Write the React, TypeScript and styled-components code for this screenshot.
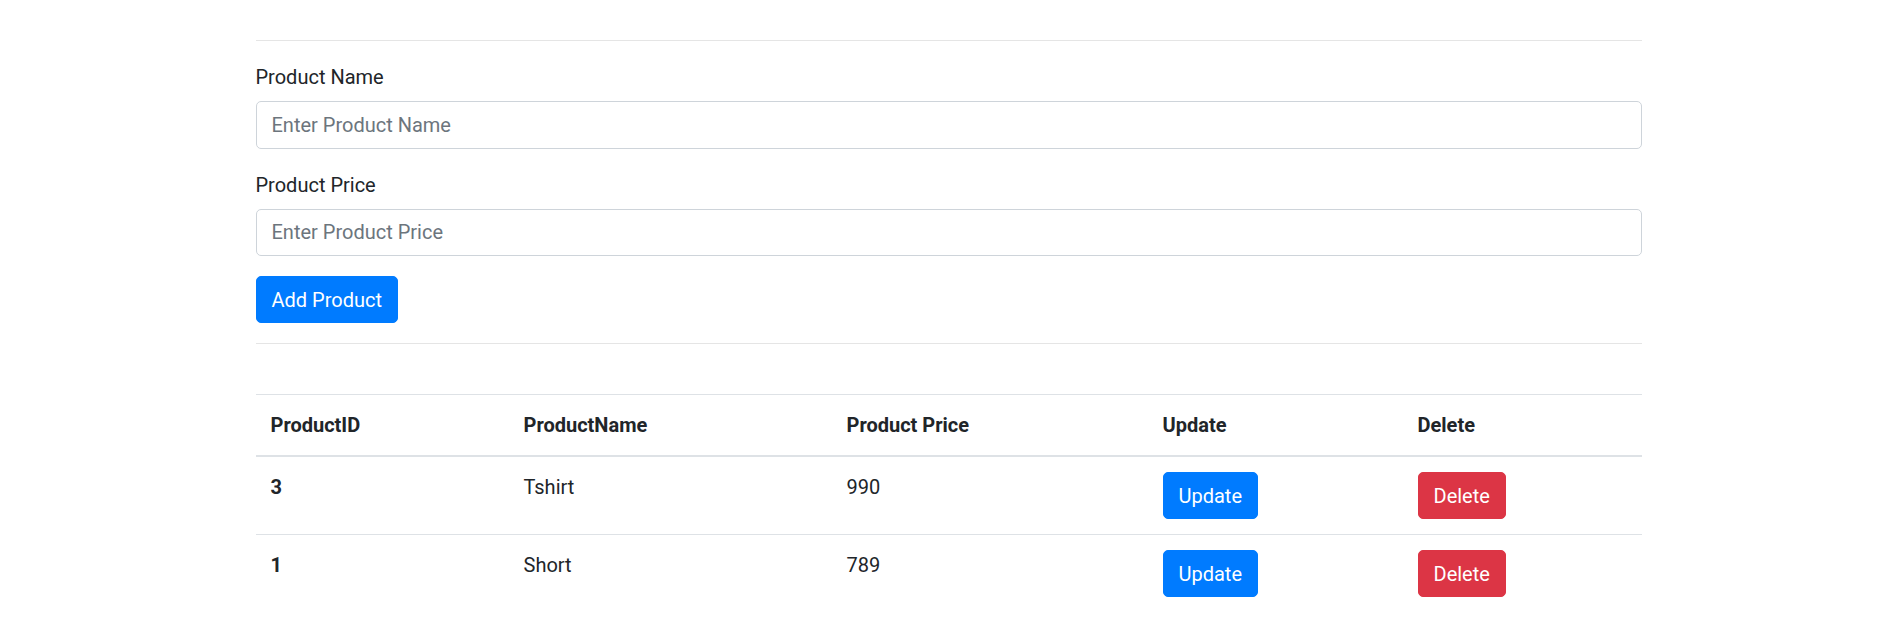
import React from "react";
import styled, { createGlobalStyle } from "styled-components";

type Product = {
  id: number;
  name: string;
  price: number;
};

const products: Product[] = [
  { id: 3, name: "Tshirt", price: 990 },
  { id: 1, name: "Short", price: 789 },
];

const columns = [
  { title: "ProductID", width: 253 },
  { title: "ProductName", width: 323 },
  { title: "Product Price", width: 316 },
  { title: "Update", width: 255 },
  { title: "Delete", width: 239 },
];

const App: React.FC = () => {
  return (
    <>
      <GlobalStyle />
      <Container>
        <Rule />
        <form onSubmit={(e) => e.preventDefault()}>
          <FormGroup>
            <Label htmlFor="productName">Product Name</Label>
            <Input id="productName" type="text" placeholder="Enter Product Name" />
          </FormGroup>
          <FormGroup>
            <Label htmlFor="productPrice">Product Price</Label>
            <Input id="productPrice" type="text" placeholder="Enter Product Price" />
          </FormGroup>
          <Button type="submit" $variant="primary">
            Add Product
          </Button>
        </form>
        <Rule />
        <Table>
          <colgroup>
            {columns.map((col) => (
              <Col key={col.title} $width={col.width} />
            ))}
          </colgroup>
          <thead>
            <tr>
              {columns.map((col) => (
                <HeadCell key={col.title}>{col.title}</HeadCell>
              ))}
            </tr>
          </thead>
          <tbody>
            {products.map((product) => (
              <tr key={product.id}>
                <RowHead scope="row">{product.id}</RowHead>
                <Cell>{product.name}</Cell>
                <Cell>{product.price}</Cell>
                <Cell>
                  <Button $variant="primary">Update</Button>
                </Cell>
                <Cell>
                  <Button $variant="danger">Delete</Button>
                </Cell>
              </tr>
            ))}
          </tbody>
        </Table>
      </Container>
    </>
  );
};

export default App;

const GlobalStyle = createGlobalStyle`
  html, body {
    margin: 0;
    padding: 0;
    background: #fff;
  }

  body {
    font-family: "Segoe UI", Roboto, "Liberation Sans", Arial, sans-serif;
    font-size: 20px;
    line-height: 1.5;
    color: #212529;
  }

  *, *::before, *::after {
    box-sizing: border-box;
  }
`;

const Container = styled.div`
  width: 1386px;
  margin: 0 auto;
  padding-top: 20px;
`;

const Rule = styled.hr`
  margin: 20px 0;
  border: 0;
  border-top: 1px solid rgba(0, 0, 0, 0.1);
`;

const FormGroup = styled.div`
  margin-bottom: 20px;
`;

const Label = styled.label`
  display: inline-block;
  margin-bottom: 10px;
  padding-top: 1px;
`;

const Input = styled.input`
  display: block;
  width: 100%;
  height: 47.5px;
  margin-top: -1px;
  padding: 7.5px 15px;
  font-family: inherit;
  font-size: 20px;
  line-height: 1.5;
  color: #495057;
  background: #fff;
  border: 1px solid #ced4da;
  border-radius: 5px;
  outline: none;

  &::placeholder {
    color: #6c757d;
  }
`;

const Button = styled.button<{ $variant: "primary" | "danger" }>`
  display: inline-block;
  padding: 7.5px 15px;
  font-family: inherit;
  font-size: 20px;
  font-weight: 400;
  line-height: 1.5;
  color: #fff;
  border-radius: 5px;
  border: 1.25px solid
    ${({ $variant }) => ($variant === "primary" ? "#007bff" : "#dc3545")};
  background-color: ${({ $variant }) =>
    $variant === "primary" ? "#007bff" : "#dc3545"};
  cursor: pointer;
`;

const Table = styled.table`
  width: 100%;
  margin-top: 50px;
  table-layout: fixed;
  border-collapse: collapse;
  color: #212529;
`;

const Col = styled.col<{ $width: number }>`
  width: ${({ $width }) => $width}px;
`;

const HeadCell = styled.th`
  padding: 15px;
  text-align: left;
  font-weight: 700;
  vertical-align: bottom;
  border-top: 1px solid #dee2e6;
  border-bottom: 2px solid #dee2e6;
`;

const RowHead = styled.th`
  padding: 15px;
  text-align: left;
  font-weight: 700;
  vertical-align: top;
  border-top: 1px solid #dee2e6;
`;

const Cell = styled.td`
  padding: 15px;
  vertical-align: top;
  border-top: 1px solid #dee2e6;
`;
